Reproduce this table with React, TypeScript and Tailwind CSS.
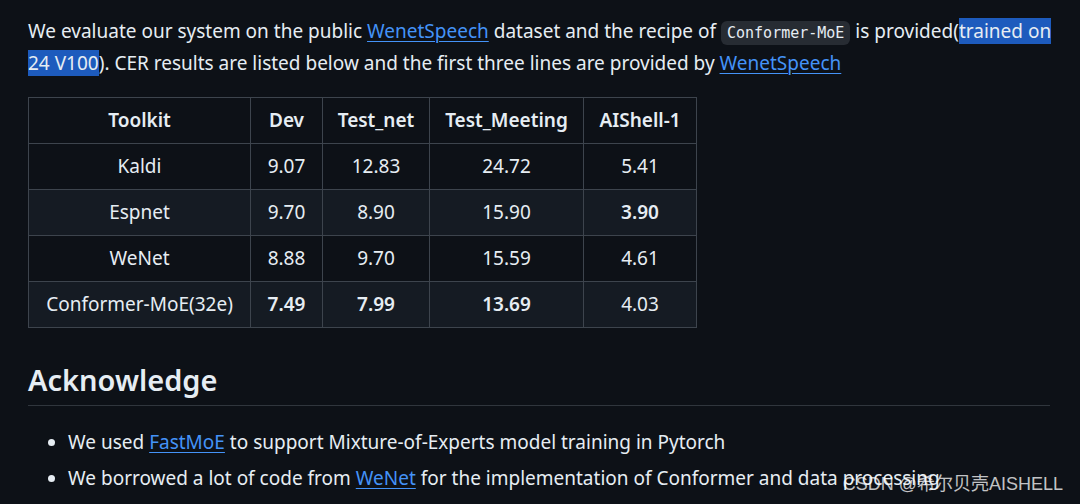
import React from "react";

const rows = [
  { kit: "Kaldi", dev: "9.07", net: "12.83", meet: "24.72", ais: "5.41", bold: [] as string[] },
  { kit: "Espnet", dev: "9.70", net: "8.90", meet: "15.90", ais: "3.90", bold: ["ais"] },
  { kit: "WeNet", dev: "8.88", net: "9.70", meet: "15.59", ais: "4.61", bold: [] as string[] },
  { kit: "Conformer-MoE(32e)", dev: "7.49", net: "7.99", meet: "13.69", ais: "4.03", bold: ["dev", "net", "meet"] },
];

const Link = ({ children }: { children: React.ReactNode }) => (
  <a className="text-[#4493f8] underline underline-offset-[3px] decoration-1">{children}</a>
);

export default function App() {
  const cell = "border border-[#3d444d] text-center whitespace-nowrap p-0";
  return (
    <div className="relative w-[1080px] h-[504px] overflow-hidden bg-[#0d1117] text-[#e6edf3] font-['Noto_Sans',sans-serif]">
      <div className="pl-[28px] pr-[30px] pt-[16px]">
        <p className="text-[19px] leading-[30px] -mr-[8px]">
          We evaluate our system on the public <Link>WenetSpeech</Link> dataset and the recipe of{" "}
          <code className="font-['DejaVu_Sans_Mono',monospace] text-[15px] bg-[#272c33] rounded-md px-[6px] py-[3px]">
            Conformer-MoE
          </code>{" "}
          is provided(<span className="bg-[#1d5bbd]">trained on</span>
          <br />
          <span className="bg-[#1d5bbd]">24 V100</span>). CER results are listed below and the first three lines are provided by{" "}
          <Link>WenetSpeech</Link>
        </p>

        <table className="mt-[19px] border-collapse table-fixed w-[668px] text-[19px]">
          <thead>
            <tr className="h-[46px]">
              <th className={`${cell} w-[222px] font-semibold`}>Toolkit</th>
              <th className={`${cell} w-[72px] font-semibold`}>Dev</th>
              <th className={`${cell} w-[107px] font-semibold`}>Test_net</th>
              <th className={`${cell} w-[154px] font-semibold`}>Test_Meeting</th>
              <th className={`${cell} w-[113px] font-semibold`}>AIShell-1</th>
            </tr>
          </thead>
          <tbody>
            {rows.map((r, i) => (
              <tr key={r.kit} className={`h-[46px] ${i % 2 === 1 ? "bg-[#151b23]" : "bg-[#0d1117]"}`}>
                <td className={cell}>{r.kit}</td>
                <td className={`${cell} ${r.bold.includes("dev") ? "font-semibold" : ""}`}>{r.dev}</td>
                <td className={`${cell} ${r.bold.includes("net") ? "font-semibold" : ""}`}>{r.net}</td>
                <td className={`${cell} ${r.bold.includes("meet") ? "font-semibold" : ""}`}>{r.meet}</td>
                <td className={`${cell} ${r.bold.includes("ais") ? "font-semibold" : ""}`}>{r.ais}</td>
              </tr>
            ))}
          </tbody>
        </table>

        <h2 className="mt-[32px] text-[29px] font-semibold leading-[40px] pb-[5px] border-b border-[#30363d]">
          Acknowledge
        </h2>

        <ul className="mt-[18px] list-disc pl-[40px] text-[19px] leading-[36px]">
          <li>
            We used <Link>FastMoE</Link> to support Mixture-of-Experts model training in Pytorch
          </li>
          <li>
            We borrowed a lot of code from <Link>WeNet</Link> for the implementation of Conformer and data processing
          </li>
        </ul>
      </div>

      <div className="absolute right-[17px] bottom-[6px] text-[18px] text-white/75 font-['Liberation_Sans','Noto_Sans_CJK_SC',sans-serif]">
        CSDN @希尔贝壳AISHELL
      </div>
    </div>
  );
}
